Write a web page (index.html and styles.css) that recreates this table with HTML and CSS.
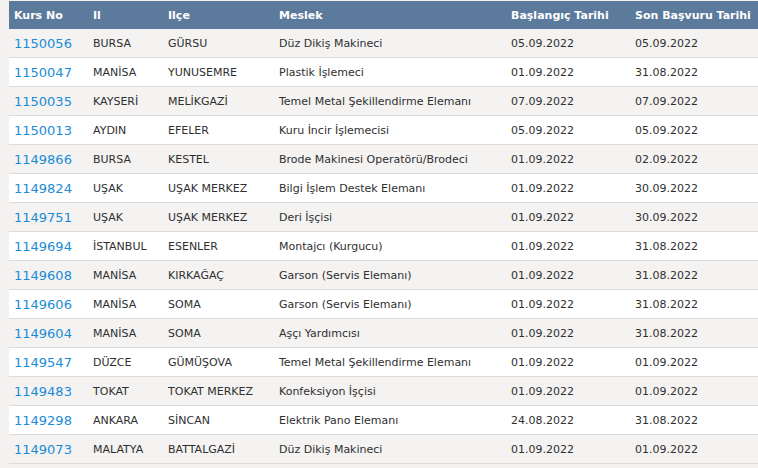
FILE: index.html
```html
<!DOCTYPE html>
<html lang="tr">
<head>
<meta charset="utf-8">
<title>Kurslar</title>
<link rel="stylesheet" href="styles.css">
</head>
<body>
<div class="wrap">
<table class="kurs">
<colgroup>
<col class="c1"><col class="c2"><col class="c3"><col class="c4"><col class="c5"><col class="c6">
</colgroup>
<thead>
<tr><th>Kurs No</th><th>Il</th><th>Ilçe</th><th>Meslek</th><th>Başlangıç Tarihi</th><th>Son Başvuru Tarihi</th></tr>
</thead>
<tbody>
<tr><td><a href="#">1150056</a></td><td>BURSA</td><td>GÜRSU</td><td>Düz Dikiş Makineci</td><td>05.09.2022</td><td>05.09.2022</td></tr>
<tr><td><a href="#">1150047</a></td><td>MANİSA</td><td>YUNUSEMRE</td><td>Plastik İşlemeci</td><td>01.09.2022</td><td>31.08.2022</td></tr>
<tr><td><a href="#">1150035</a></td><td>KAYSERİ</td><td>MELİKGAZİ</td><td>Temel Metal Şekillendirme Elemanı</td><td>07.09.2022</td><td>07.09.2022</td></tr>
<tr><td><a href="#">1150013</a></td><td>AYDIN</td><td>EFELER</td><td>Kuru İncir İşlemecisi</td><td>05.09.2022</td><td>05.09.2022</td></tr>
<tr><td><a href="#">1149866</a></td><td>BURSA</td><td>KESTEL</td><td>Brode Makinesi Operatörü/Brodeci</td><td>01.09.2022</td><td>02.09.2022</td></tr>
<tr><td><a href="#">1149824</a></td><td>UŞAK</td><td>UŞAK MERKEZ</td><td>Bilgi İşlem Destek Elemanı</td><td>01.09.2022</td><td>30.09.2022</td></tr>
<tr><td><a href="#">1149751</a></td><td>UŞAK</td><td>UŞAK MERKEZ</td><td>Deri İşçisi</td><td>01.09.2022</td><td>30.09.2022</td></tr>
<tr><td><a href="#">1149694</a></td><td>İSTANBUL</td><td>ESENLER</td><td>Montajcı (Kurgucu)</td><td>01.09.2022</td><td>31.08.2022</td></tr>
<tr><td><a href="#">1149608</a></td><td>MANİSA</td><td>KIRKAĞAÇ</td><td>Garson (Servis Elemanı)</td><td>01.09.2022</td><td>31.08.2022</td></tr>
<tr><td><a href="#">1149606</a></td><td>MANİSA</td><td>SOMA</td><td>Garson (Servis Elemanı)</td><td>01.09.2022</td><td>31.08.2022</td></tr>
<tr><td><a href="#">1149604</a></td><td>MANİSA</td><td>SOMA</td><td>Aşçı Yardımcısı</td><td>01.09.2022</td><td>31.08.2022</td></tr>
<tr><td><a href="#">1149547</a></td><td>DÜZCE</td><td>GÜMÜŞOVA</td><td>Temel Metal Şekillendirme Elemanı</td><td>01.09.2022</td><td>01.09.2022</td></tr>
<tr><td><a href="#">1149483</a></td><td>TOKAT</td><td>TOKAT MERKEZ</td><td>Konfeksiyon İşçisi</td><td>01.09.2022</td><td>01.09.2022</td></tr>
<tr><td><a href="#">1149298</a></td><td>ANKARA</td><td>SİNCAN</td><td>Elektrik Pano Elemanı</td><td>24.08.2022</td><td>31.08.2022</td></tr>
<tr><td><a href="#">1149073</a></td><td>MALATYA</td><td>BATTALGAZİ</td><td>Düz Dikiş Makineci</td><td>01.09.2022</td><td>01.09.2022</td></tr>
</tbody>
</table>
</div>
</body>
</html>
```
FILE: styles.css
```css
html, body {
  margin: 0;
  padding: 0;
  background: #f3f2f0;
}
body {
  padding: 1px 0 0 9px;
  overflow: hidden;
  font-family: "DejaVu Sans", Verdana, sans-serif;
}
.wrap {
  width: 760px;
  overflow: hidden;
}
.kurs {
  border-collapse: collapse;
  table-layout: fixed;
  width: 760px;
  font-size: 11px;
  color: #2f2f2f;
}
.c1 { width: 79px; }
.c2 { width: 75px; }
.c3 { width: 111px; }
.c4 { width: 232px; }
.c5 { width: 124px; }
.c6 { width: 139px; }
.kurs th {
  background: #5b7a9c;
  color: #fff;
  font-weight: bold;
  text-align: left;
  height: 28px;
  padding: 0 5px;
  white-space: nowrap;
}
.kurs td {
  height: 27px;
  padding: 1px 5px 0;
  border-bottom: 1px solid #dddcdb;
  white-space: nowrap;
}
.kurs tbody tr:nth-child(odd) td { background: #f4f3f2; }
.kurs tbody tr:nth-child(even) td { background: #ffffff; }
.kurs a {
  color: #1a8bd6;
  text-decoration: none;
  font-size: 13px;
}
```
